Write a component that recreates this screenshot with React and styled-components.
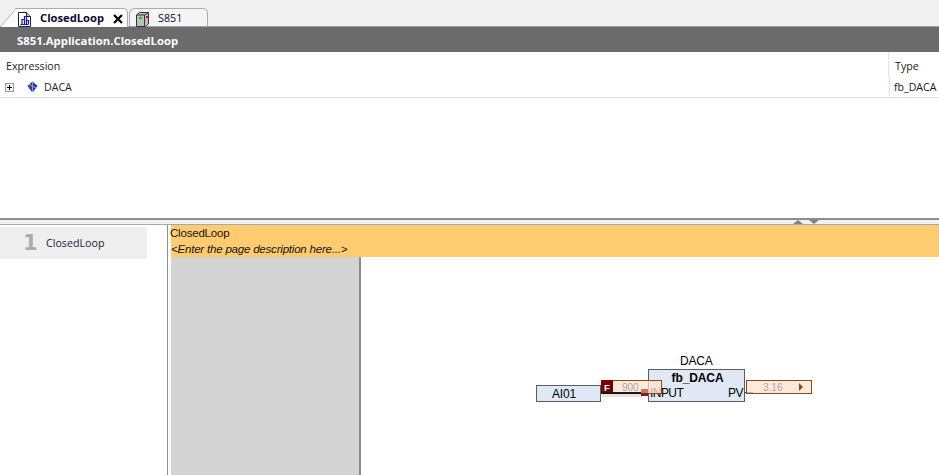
import React from "react";
import styled, { createGlobalStyle } from "styled-components";

const Global = createGlobalStyle`
  html, body { margin: 0; padding: 0; background: #fff; overflow: hidden; }
  #root { width: 939px; height: 475px; }
`;
const Page = styled.div`
  width: 939px; height: 475px; display: flex; flex-direction: column; overflow: hidden;
  font-family: "Liberation Sans", Arial, sans-serif; font-size: 11px; color: #000; background: #fff;
`;
const TabStrip = styled.div`
  height: 27px; box-sizing: border-box; background: #f0f0f0; padding: 8px 0 0 0; display: flex; position: relative;
  border-bottom: 1px solid #a0a0a0; flex: none;
`;
const Slant = styled.svg`
  position: absolute; left: 0; top: 8px;
`;
const Tab = styled.div`
  height: ${p => p.$active ? 19 : 18}px; box-sizing: border-box; width: ${p => p.$w}px; margin-left: ${p => p.$ml}px;
  display: flex; align-items: center; background: ${p => p.$active ? "#fff" : "#f4f4f4"};
  border: 1px solid #acacac; border-bottom: none; border-left: ${p => p.$active ? "none" : "1px solid #acacac"};
  border-radius: ${p => p.$active ? "0 5px 0 0" : "6px 5px 0 0"};
  position: relative; z-index: 1;
`;
const TabIcon = styled.svg` flex: none; margin-left: ${p => p.$ml}px; margin-top: 3px; `;
const TabLabel = styled.span`
  margin-left: ${p => p.$ml}px; font-weight: ${p => p.$bold ? 700 : 400}; color: #0b0b33; white-space: nowrap;
  font-family: "Open Sans", sans-serif; font-size: ${p => p.$bold ? 11.2 : 10.8}px; margin-top: -1px;
`;
const CloseX = styled.svg` position: absolute; right: 4px; top: 5px; `;
const TitleBar = styled.div`
  height: 25px; flex: none; background: #6b6b6b; color: #fff; font-family: "Open Sans", sans-serif; font-size: 11.3px; font-weight: 700;
  display: flex; align-items: center; padding-left: 17px; padding-top: 1px; box-sizing: border-box;
`;
const Watch = styled.div` height: 166px; flex: none; display: flex; flex-direction: column; `;
const Row = styled.div`
  display: grid; grid-template-columns: 888px 1fr; height: ${p => p.$h}px; flex: none; font-family: "Open Sans", sans-serif; font-size: 10.6px;
  border-bottom: ${p => p.$line ? "1px solid #e3e3e3" : "none"}; box-sizing: border-box;
`;
const HeadCell = styled.div`
  display: flex; align-items: center; padding-left: ${p => p.$pad}px; white-space: nowrap; color: #1a1a1a; overflow: hidden;
  border-left: ${p => p.$sep ? "1px solid #e3e3e3" : "none"}; font-size: 10.7px; padding-top: 2px;
`;
const TreeCell = styled.div` display: flex; align-items: center; padding-left: 5px; color: #1a1a3a; `;
const TypeCell = styled.div`
  display: flex; align-items: center; padding-left: 4px; border-left: 1px solid #e3e3e3; white-space: nowrap; overflow: hidden; color: #1a1a1a; margin-left: 1px;
`;
const Expander = styled.svg` flex: none; `;
const VarIcon = styled.svg` flex: none; margin-left: 13px; `;
const VarName = styled.span` margin-left: 6px; `;
const Splitter = styled.div`
  height: 7px; flex: none; box-sizing: border-box; background: #f0f0f0; border-top: 2px solid #8c8c8c; border-bottom: 1px solid #a9a9a9;
  display: flex; justify-content: flex-end; align-items: flex-start; gap: 6px; padding-right: 120px;
`;
const Arrow = styled.div`
  width: 0; height: 0; border-left: 5px solid transparent; border-right: 5px solid transparent;
  ${p => p.$up ? "border-bottom: 4px solid #808080;" : "border-top: 4px solid #808080;"}
`;
const Editor = styled.div` flex: 1; display: flex; min-height: 0; `;
const PageList = styled.div` width: 168px; flex: none; box-sizing: border-box; border-right: 1px solid #8f8f8f; padding-top: 2px; `;
const PageItem = styled.div`
  width: 147px; height: 32px; background: #efefef; display: flex; align-items: center;
`;
const PageNum = styled.span` width: 46px; box-sizing: border-box; padding-left: 23px; font: 700 21px "DejaVu Sans", sans-serif; color: #ababab; `;
const PageName = styled.span` font-family: "Open Sans", sans-serif; font-size: 10.7px; color: #1a1a3a; `;
const Sheet = styled.div` flex: 1; display: flex; flex-direction: column; padding-left: 3px; min-width: 0; `;
const SheetHead = styled.div`
  height: 32px; flex: none; background: #ffcb70; padding-top: 1px; box-sizing: border-box; font-size: 11.5px;
  display: flex; flex-direction: column; letter-spacing: -0.2px; color: #141414;
`;
const SheetTitle = styled.div` height: 15px; line-height: 15px; margin-left: -1px; `;
const SheetDesc = styled.div` font-style: italic; height: 16px; line-height: 16px; `;
const SheetBody = styled.div` flex: 1; display: flex; min-height: 0; `;
const Gutter = styled.div` width: 190px; box-sizing: border-box; background: #d3d3d3; border-right: 2px solid #8a8a8a; flex: none; `;
const Canvas = styled.div` flex: 1; position: relative; `;
/* FBD nodes sit on a free canvas; offsets are relative to x=361, y=257 */
const Node = styled.div`
  position: absolute; left: ${p => p.$x}px; top: ${p => p.$y}px; width: ${p => p.$w}px; height: ${p => p.$h}px; box-sizing: border-box;
  background: #e0e8f5; border: 1px solid #5c5c5c; font-size: 12px;
`;
const InputBox = styled(Node)` display: flex; align-items: center; justify-content: center; letter-spacing: -0.2px; padding-right: 9px; `;
const FbTitle = styled.div` text-align: center; font-weight: 700; line-height: 14px; height: 14px; padding-top: 1px; padding-left: 2px; letter-spacing: -0.1px; `;
const FbPins = styled.div` display: flex; justify-content: space-between; line-height: 14px; padding: 1px 0 0 1px; letter-spacing: -0.55px; `;
const PvLabel = styled.span` margin-right: 1px; `;
const InstName = styled.div` position: absolute; left: 319px; top: 97px; font-size: 12px; letter-spacing: -0.2px; `;
const Wire = styled.div`
  position: absolute; left: ${p => p.$x}px; top: ${p => p.$y}px; width: ${p => p.$w}px; height: ${p => p.$h}px; background: ${p => p.$c};
`;
const Monitor = styled.div`
  position: absolute; left: ${p => p.$x}px; top: ${p => p.$y}px; width: ${p => p.$w}px; height: 14px; box-sizing: border-box;
  background: rgba(253, 226, 205, 0.75); border: 1px solid #8b4a14; font-size: 10px; color: #aaa7a3; display: flex; align-items: center; line-height: 11px;
`;
const ForceFlag = styled.div`
  width: 12px; height: 14px; margin: -1px 0 -1px -1px; background: #7b0000; color: #fff; font-weight: 700; font-size: 9.5px;
  display: flex; align-items: center; justify-content: center; flex: none;
`;
const MonValue = styled.span` margin-left: ${p => p.$ml}px; `;
const MonArrow = styled.div`
  width: 0; height: 0; border-top: 4px solid transparent; border-bottom: 4px solid transparent; border-left: 4px solid #8b4a14; margin-left: auto; margin-right: 8px;
`;

export default function App() {
  return (
    <Page>
      <Global />
      <TabStrip>
        <Slant width="18" height="19" viewBox="0 0 18 19"><path d="M0.5 18.5 L16 1 L18 0.5 L18 19 L3 19 Z" fill="#fff" /><path d="M0.5 18.5 L16 1 L18 0.5" fill="none" stroke="#b4b4b4" /></Slant>
        <Tab $active $w={113} $ml={15}>
          <TabIcon $ml={3} width="13" height="15" viewBox="0 0 13 15">
            <path d="M0.5 0.5 H8.5 L12.5 4.5 V14.5 H0.5 Z" fill="#fff" stroke="#222" />
            <path d="M8.5 0.5 V4.5 H12.5" fill="#c8c8c8" stroke="#222" />
            <path d="M2.5 12.5 H10.5 M4 12 V7.5 H6.5 V12 M6.5 9.5 V4.5 H8.5 V12 M8.5 8.5 H10.5 V12" fill="none" stroke="#0f0fe0" strokeWidth="1.2" />
          </TabIcon>
          <TabLabel $bold $ml={9}>ClosedLoop</TabLabel>
          <CloseX width="10" height="10" viewBox="0 0 10 10"><path d="M1 1 L9 9 M9 1 L1 9" stroke="#000" strokeWidth="2.2" /></CloseX>
        </Tab>
        <Tab $w={79} $ml={1}>
          <TabIcon $ml={6} width="13" height="15" viewBox="0 0 13 15">
            <path d="M0.5 3 L3.5 0.5 H12.5 V12 L9.5 14.5 H0.5 Z" fill="#bdbdbd" stroke="#333" />
            <path d="M0.5 3 H8.5 V14.5 M8.5 3 L12.5 0.5" fill="none" stroke="#333" />
            <rect x="3" y="5" width="3" height="2" fill="#0ed00e" /><rect x="10" y="4" width="2" height="2" fill="#d11" />
          </TabIcon>
          <TabLabel $ml={9}>S851</TabLabel>
        </Tab>
      </TabStrip>
      <TitleBar>S851.Application.ClosedLoop</TitleBar>
      <Watch>
        <Row $h={25}>
          <HeadCell $pad={6}>Expression</HeadCell>
          <HeadCell $pad={6} $sep>Type</HeadCell>
        </Row>
        <Row $h={21} $line>
          <TreeCell>
            <Expander width="9" height="9" viewBox="0 0 9 9"><rect x="0.5" y="0.5" width="8" height="8" fill="#f4f4f4" stroke="#9a9a9a" /><path d="M2 4.5 H7 M4.5 2 V7" stroke="#000" /></Expander>
            <VarIcon width="11" height="12" viewBox="0 0 11 12"><path d="M5.5 1 L10 5 L5.5 11 L1 5 Z" fill="#2a3cc0" stroke="#202a60" strokeWidth="0.8" /><path d="M5.5 1 L5.5 11 M2 3.5 L9 7" stroke="#9fb0f0" strokeWidth="0.8" /></VarIcon>
            <VarName>DACA</VarName>
          </TreeCell>
          <TypeCell>fb_DACA</TypeCell>
        </Row>
      </Watch>
      <Splitter><Arrow $up /><Arrow /></Splitter>
      <Editor>
        <PageList>
          <PageItem><PageNum>1</PageNum><PageName>ClosedLoop</PageName></PageItem>
        </PageList>
        <Sheet>
          <SheetHead>
            <SheetTitle>ClosedLoop</SheetTitle>
            <SheetDesc>&lt;Enter the page description here...&gt;</SheetDesc>
          </SheetHead>
          <SheetBody>
            <Gutter />
            <Canvas>
              <InstName>DACA</InstName>
              <InputBox $x={175} $y={128} $w={65} $h={17}>AI01</InputBox>
              <Wire $x={241} $y={137} $w={40} $h={3} $c="#e4e0dc" />
              <Node $x={287} $y={112} $w={97} $h={33}>
                <FbTitle>fb_DACA</FbTitle>
                <FbPins><span>INPUT</span><PvLabel>PV</PvLabel></FbPins>
              </Node>
              <Monitor $x={240} $y={123} $w={61}><ForceFlag>F</ForceFlag><MonValue $ml={9}>900</MonValue></Monitor>
              <Wire $x={240} $y={135} $w={47} $h={2} $c="#1a1a1a" />
              <Wire $x={280} $y={136} $w={7} $h={3} $c="#8e1a12" />
              <Wire $x={280} $y={132} $w={7} $h={4} $c="#c47a68" />
              <Wire $x={384} $y={135} $w={8} $h={1} $c="#1a1a1a" />
              <Monitor $x={385} $y={123} $w={66}><MonValue $ml={16}>3.16</MonValue><MonArrow /></Monitor>
            </Canvas>
          </SheetBody>
        </Sheet>
      </Editor>
    </Page>
  );
}
